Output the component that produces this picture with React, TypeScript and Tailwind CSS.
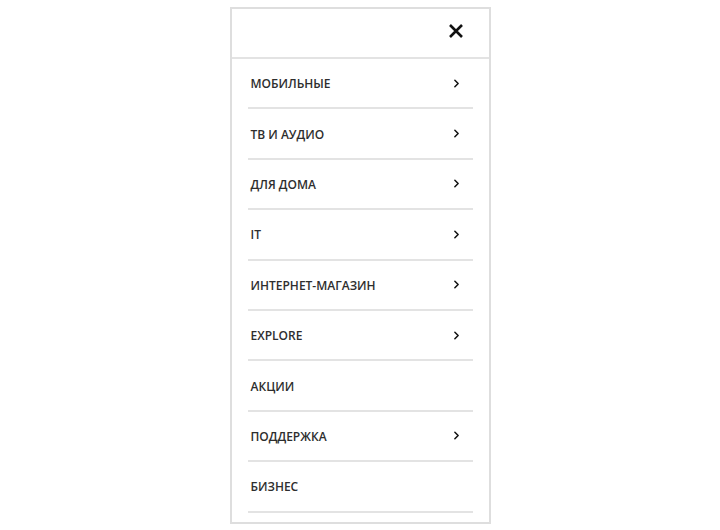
import { ChevronRight } from "lucide-react";

const items = [
  { label: "Мобильные", arrow: true },
  { label: "ТВ и аудио", arrow: true },
  { label: "Для дома", arrow: true },
  { label: "IT", arrow: true },
  { label: "Интернет-магазин", arrow: true },
  { label: "Explore", arrow: true },
  { label: "Акции", arrow: false },
  { label: "Поддержка", arrow: true },
  { label: "Бизнес", arrow: false },
];

export default function App() {
  return (
    <div className="min-h-screen bg-white pt-[7px] font-['Open_Sans',sans-serif]">
      <nav className="mx-auto w-[261px] border-2 border-[#dedede] bg-white">
        {/* header with close button */}
        <div className="flex h-[50px] items-center justify-end border-b-2 border-[#e3e3e3] pb-[4px] pr-[25px]">
          <button className="text-[#111]" aria-label="Закрыть">
            <svg width="16" height="16" viewBox="0 0 16 16" fill="none">
              <path
                d="M2 2L14 14M14 2L2 14"
                stroke="currentColor"
                strokeWidth="2.6"
                strokeLinecap="butt"
              />
            </svg>
          </button>
        </div>

        <ul className="px-[16px] pb-[9px]">
          {items.map((item) => (
            <li
              key={item.label}
              className="flex h-[50.4px] items-center justify-between border-b-2 border-[#e3e3e3] pl-[3px] pr-[10px]"
            >
              <span className="pt-[2px] text-[12px] font-semibold uppercase text-[#2e2e2e]">
                {item.label}
              </span>
              {item.arrow && (
                <ChevronRight size={13} strokeWidth={2.8} className="text-[#111]" />
              )}
            </li>
          ))}
        </ul>
      </nav>
    </div>
  );
}
